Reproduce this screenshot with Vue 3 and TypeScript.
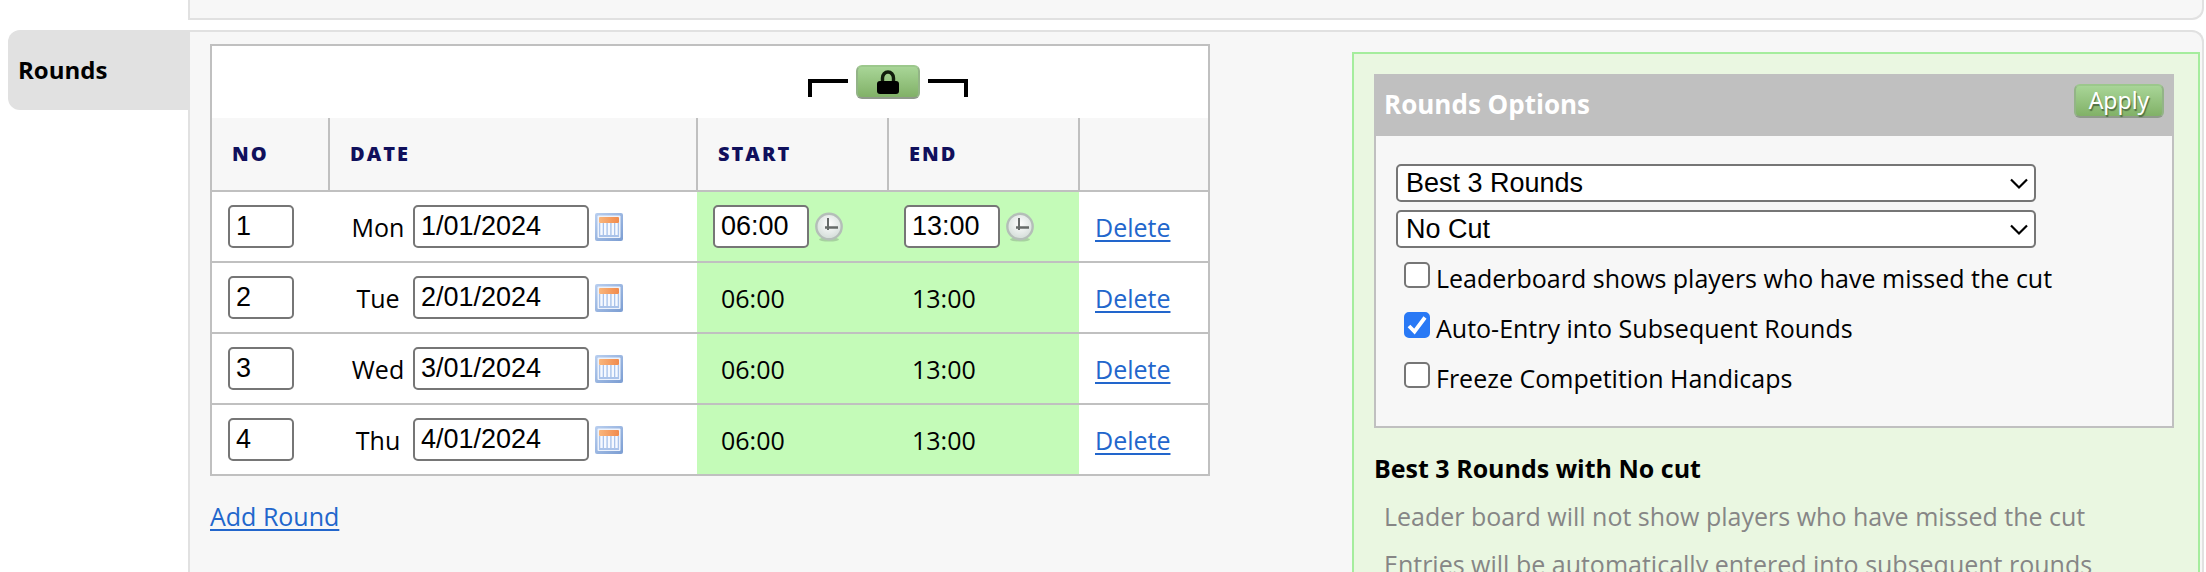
<script setup lang="ts">
import { ref } from 'vue'

interface Round {
  no: string
  day: string
  date: string
  start: string
  end: string
}

const rounds = ref<Round[]>([
  { no: '1', day: 'Mon', date: '1/01/2024', start: '06:00', end: '13:00' },
  { no: '2', day: 'Tue', date: '2/01/2024', start: '06:00', end: '13:00' },
  { no: '3', day: 'Wed', date: '3/01/2024', start: '06:00', end: '13:00' },
  { no: '4', day: 'Thu', date: '4/01/2024', start: '06:00', end: '13:00' },
])

const scoring = ref('Best 3 Rounds')
const cut = ref('No Cut')

const options = ref([
  { label: 'Leaderboard shows players who have missed the cut', on: false },
  { label: 'Auto-Entry into Subsequent Rounds', on: true },
  { label: 'Freeze Competition Handicaps', on: false },
])
</script>

<template>
  <main class="page">
    <div class="panel panel-previous"></div>

    <section class="section">
      <h2 class="tab">Rounds</h2>

      <div class="panel panel-rounds">
        <div class="rounds">
          <table class="table">
            <colgroup>
              <col class="col-no" />
              <col />
              <col class="col-time" />
              <col class="col-time" />
              <col class="col-action" />
            </colgroup>
            <thead>
              <tr class="lock-row">
                <td colspan="2"></td>
                <td colspan="2">
                  <div class="lock-group">
                    <svg class="bracket" viewBox="0 0 40 18" aria-hidden="true">
                      <path d="M2 18V2H40" fill="none" stroke="#000" stroke-width="4" />
                    </svg>
                    <button type="button" class="green-button lock-button" aria-label="Lock start and end times">
                      <svg class="lock-icon" viewBox="0 0 22 24" aria-hidden="true">
                        <path d="M5.5 13V8a5.5 6 0 0 1 11 0v5" fill="none" stroke="#111c0c" stroke-width="3.4" />
                        <rect x="0" y="11" width="22" height="13" rx="3" fill="#000" />
                      </svg>
                    </button>
                    <svg class="bracket" viewBox="0 0 40 18" aria-hidden="true">
                      <path d="M0 2H38V18" fill="none" stroke="#000" stroke-width="4" />
                    </svg>
                  </div>
                </td>
                <td></td>
              </tr>
              <tr class="head-row">
                <th scope="col">NO</th>
                <th scope="col">DATE</th>
                <th scope="col">START</th>
                <th scope="col">END</th>
                <td></td>
              </tr>
            </thead>
            <tbody>
              <tr v-for="(round, i) in rounds" :key="i">
                <td class="cell-no">
                  <input v-model="round.no" class="field field-no" type="text" :aria-label="`Round ${i + 1} number`" />
                </td>
                <td class="cell-date">
                  <div class="control">
                    <span class="day">{{ round.day }}</span>
                    <input v-model="round.date" class="field field-date" type="text" :aria-label="`Round ${i + 1} date`" />
                    <button type="button" class="icon-button" aria-label="Pick a date">
                      <svg class="icon" viewBox="0 0 30 30" aria-hidden="true">
                        <defs>
                          <linearGradient :id="`frame${i}`" x1="0" y1="0" x2="1" y2="1">
                            <stop offset="0" stop-color="#b9cff0" />
                            <stop offset="1" stop-color="#7b9dd2" />
                          </linearGradient>
                          <linearGradient :id="`bar${i}`" x1="0" y1="0" x2="1" y2="0">
                            <stop offset="0" stop-color="#f9b67c" />
                            <stop offset="1" stop-color="#f18a4c" />
                          </linearGradient>
                        </defs>
                        <rect x="1" y="1" width="28" height="28" rx="2" :fill="`url(#frame${i})`" />
                        <rect x="3.5" y="3.5" width="23" height="22.5" rx="1" fill="#eef3fc" />
                        <rect x="5" y="11" width="20" height="14" fill="#aac3ea" />
                        <path d="M7.5 11V23M11.2 11V23M15 11V23M18.8 11V23M22.5 11V23" stroke="#f6f9ff" stroke-width="2.4" />
                        <rect x="5" y="5" width="20" height="6" rx="1" :fill="`url(#bar${i})`" />
                      </svg>
                    </button>
                  </div>
                </td>
                <td v-for="key in (['start', 'end'] as const)" :key="key" class="cell-time">
                  <div v-if="i === 0" class="control">
                    <input v-model="round[key]" class="field field-time" type="text" :aria-label="`Round ${i + 1} ${key} time`" />
                    <button type="button" class="icon-button" aria-label="Pick a time">
                      <svg class="icon" viewBox="0 0 30 30" aria-hidden="true">
                        <defs>
                          <radialGradient :id="`face-${key}`" cx="0.5" cy="0.4" r="0.6">
                            <stop offset="0" stop-color="#ffffff" />
                            <stop offset="1" stop-color="#d3dcd8" />
                          </radialGradient>
                        </defs>
                        <ellipse cx="15" cy="27.5" rx="10" ry="2" fill="#8aa888" opacity="0.5" />
                        <circle cx="15" cy="14.5" r="12.7" :fill="`url(#face-${key})`" stroke="#b4beb8" stroke-width="2.4" />
                        <path d="M14 6V18" stroke="#666b69" stroke-width="2" />
                        <path d="M11 15.5H24" stroke="#666b69" stroke-width="2.5" />
                      </svg>
                    </button>
                  </div>
                  <span v-else class="time">{{ round[key] }}</span>
                </td>
                <td class="cell-action"><a href="#">Delete</a></td>
              </tr>
            </tbody>
          </table>
          <a class="add" href="#">Add Round</a>
        </div>

        <aside class="options">
          <section class="box">
            <header class="box-head">
              <h3>Rounds Options</h3>
              <button type="button" class="green-button apply-button">Apply</button>
            </header>
            <div class="box-body">
              <div class="select">
                <select v-model="scoring" aria-label="Scoring rounds">
                  <option>Best 3 Rounds</option>
                </select>
                <svg class="chevron" viewBox="0 0 18 12" aria-hidden="true">
                  <path d="M1 1.5L9 9.5L17 1.5" fill="none" stroke="#000" stroke-width="2.2" />
                </svg>
              </div>
              <div class="select">
                <select v-model="cut" aria-label="Cut">
                  <option>No Cut</option>
                </select>
                <svg class="chevron" viewBox="0 0 18 12" aria-hidden="true">
                  <path d="M1 1.5L9 9.5L17 1.5" fill="none" stroke="#000" stroke-width="2.2" />
                </svg>
              </div>
              <label v-for="option in options" :key="option.label" class="check">
                <span class="check-box">
                  <input v-model="option.on" type="checkbox" />
                  <svg v-if="option.on" viewBox="0 0 26 26" aria-hidden="true">
                    <path d="M5 14L10.5 19.5L21 5.5" fill="none" stroke="#fff" stroke-width="3.8" />
                  </svg>
                </span>
                <span>{{ option.label }}</span>
              </label>
            </div>
          </section>

          <div class="summary">
            <h3>Best 3 Rounds with No cut</h3>
            <p>Leader board will not show players who have missed the cut</p>
            <p>Entries will be automatically entered into subsequent rounds</p>
          </div>
        </aside>
      </div>
    </section>
  </main>
</template>

<style>
body {
  margin: 0;
  background: #fff;
}
</style>

<style scoped>
* {
  box-sizing: border-box;
}

.page {
  display: flex;
  flex-direction: column;
  gap: 10px;
  height: 100vh;
  padding: 0 2px 0 8px;
  overflow: hidden;
  font-family: "Open Sans", "Noto Sans", sans-serif;
  font-size: 25px;
  line-height: 36px;
  color: #000;
}

h2,
h3,
p {
  margin: 0;
  font-size: inherit;
}

.panel {
  border: 2px solid #e1e1e1;
  background: #f7f7f7;
}

.panel-previous {
  flex: none;
  height: 20px;
  margin-left: 180px;
  border-top: 0;
  border-radius: 0 0 12px 0;
}

.section {
  display: flex;
  flex: 1 0 auto;
  align-items: flex-start;
}

.tab {
  flex: none;
  width: 180px;
  padding: 22px 10px;
  border-radius: 12px 0 0 12px;
  background: #e1e1e1;
  font-size: 24px;
}

.panel-rounds {
  display: grid;
  flex: 1;
  grid-template-columns: 1000fr 848fr;
  gap: 142px;
  align-self: stretch;
  padding: 12px 2px 0 20px;
  border-bottom: 0;
  border-radius: 0 12px 0 0;
}

.table {
  width: 100%;
  border: 2px solid #c0c0c0;
  border-collapse: collapse;
  background: #fff;
  table-layout: fixed;
}

.col-no {
  width: 118px;
}

.col-time {
  width: 191px;
}

.col-action {
  width: 130px;
}

td,
th {
  padding: 0 0 0 16px;
  text-align: left;
}

.lock-row td {
  height: 73px;
  padding: 0;
}

.lock-group {
  display: flex;
  align-items: center;
  justify-content: center;
  gap: 8px;
}

.bracket {
  width: 40px;
  height: 18px;
  margin-top: 12px;
}

.green-button {
  padding: 0;
  border: 2px solid #93b487;
  border-top-color: #9cc88c;
  border-bottom-color: #8f9a8b;
  border-radius: 6px;
  background: linear-gradient(#a8d597, #81b167);
}

.lock-button {
  display: flex;
  align-items: center;
  justify-content: center;
  width: 64px;
  height: 34px;
}

.lock-icon {
  width: 22px;
  height: 24px;
}

.head-row > * {
  height: 73px;
  padding-left: 20px;
  border: 2px solid #c0c0c0;
  border-top: 0;
  background: #f7f7f7;
  color: #10105c;
  font-size: 20px;
  font-weight: 800;
  letter-spacing: 2px;
}

tbody td {
  height: 71px;
  border-bottom: 2px solid #c0c0c0;
}

.cell-date {
  padding-left: 20px;
}

.cell-time {
  background: #c4fbb8;
}

.control {
  display: flex;
  align-items: center;
}

.day {
  width: 58px;
  margin-right: 6px;
  text-align: center;
}

.field {
  height: 43px;
  padding: 0 6px;
  border: 2px solid #767676;
  border-radius: 5px;
  background: #fff;
  color: #000;
  font: 27px "Liberation Sans", Arial, sans-serif;
}

.field-no {
  display: block;
  width: 66px;
}

.field-date {
  width: 176px;
}

.field-time {
  width: 96px;
}

.icon-button {
  display: block;
  margin-left: 5px;
  padding: 0;
  border: 0;
  background: none;
}

.icon {
  display: block;
  width: 30px;
  height: 30px;
}

.time {
  padding-left: 8px;
}

a {
  color: #2266cc;
  text-decoration-thickness: 2px;
  text-underline-offset: 3px;
}

.add {
  display: inline-block;
  margin-top: 22px;
}

.options {
  margin-top: 8px;
  padding: 20px 24px 0 20px;
  border: 2px solid #a5ed9d;
  border-bottom: 0;
  background: #eaf7e1;
}

.box {
  border: 2px solid #c0c0c0;
  background: #f7f7f7;
}

.box-head {
  display: flex;
  align-items: flex-start;
  justify-content: space-between;
  padding: 8px 8px 4px;
  background: #c0c0c0;
  color: #fff;
}

.box-head h3 {
  padding: 2px 0 10px;
  font-size: 26px;
}

.apply-button {
  width: 90px;
  height: 34px;
  padding-bottom: 2px;
  color: #fff;
  font: 23px "Noto Sans", "Open Sans", sans-serif;
  line-height: 26px;
  text-shadow: 1px 2px 1px #4f6f42;
}

.box-body {
  padding: 28px 20px 20px;
}

.select {
  position: relative;
  width: 640px;
  max-width: 100%;
  margin-bottom: 8px;
}

.select select {
  display: block;
  width: 100%;
  height: 38px;
  padding: 0 40px 0 8px;
  border: 2px solid #767676;
  border-radius: 5px;
  appearance: none;
  background: #fff;
  color: #000;
  font: 27px "Liberation Sans", Arial, sans-serif;
}

.chevron {
  position: absolute;
  top: 14px;
  right: 8px;
  width: 18px;
  height: 12px;
  pointer-events: none;
}

.check {
  display: flex;
  align-items: flex-start;
  gap: 6px;
  height: 50px;
  padding: 4px 0 0 8px;
}

.check-box {
  display: grid;
  flex: none;
  width: 26px;
  height: 26px;
  margin-top: 2px;
}

.check-box > * {
  grid-area: 1 / 1;
  width: 26px;
  height: 26px;
  margin: 0;
}

.check-box svg {
  pointer-events: none;
}

.check-box input {
  border: 2px solid #767676;
  border-radius: 5px;
  appearance: none;
  background: #fff;
}

.check-box input:checked {
  border-color: #2979f5;
  background: #2979f5;
}

.summary {
  padding-top: 22px;
}

.summary p {
  padding: 12px 0 0 10px;
  color: #868686;
}
</style>
